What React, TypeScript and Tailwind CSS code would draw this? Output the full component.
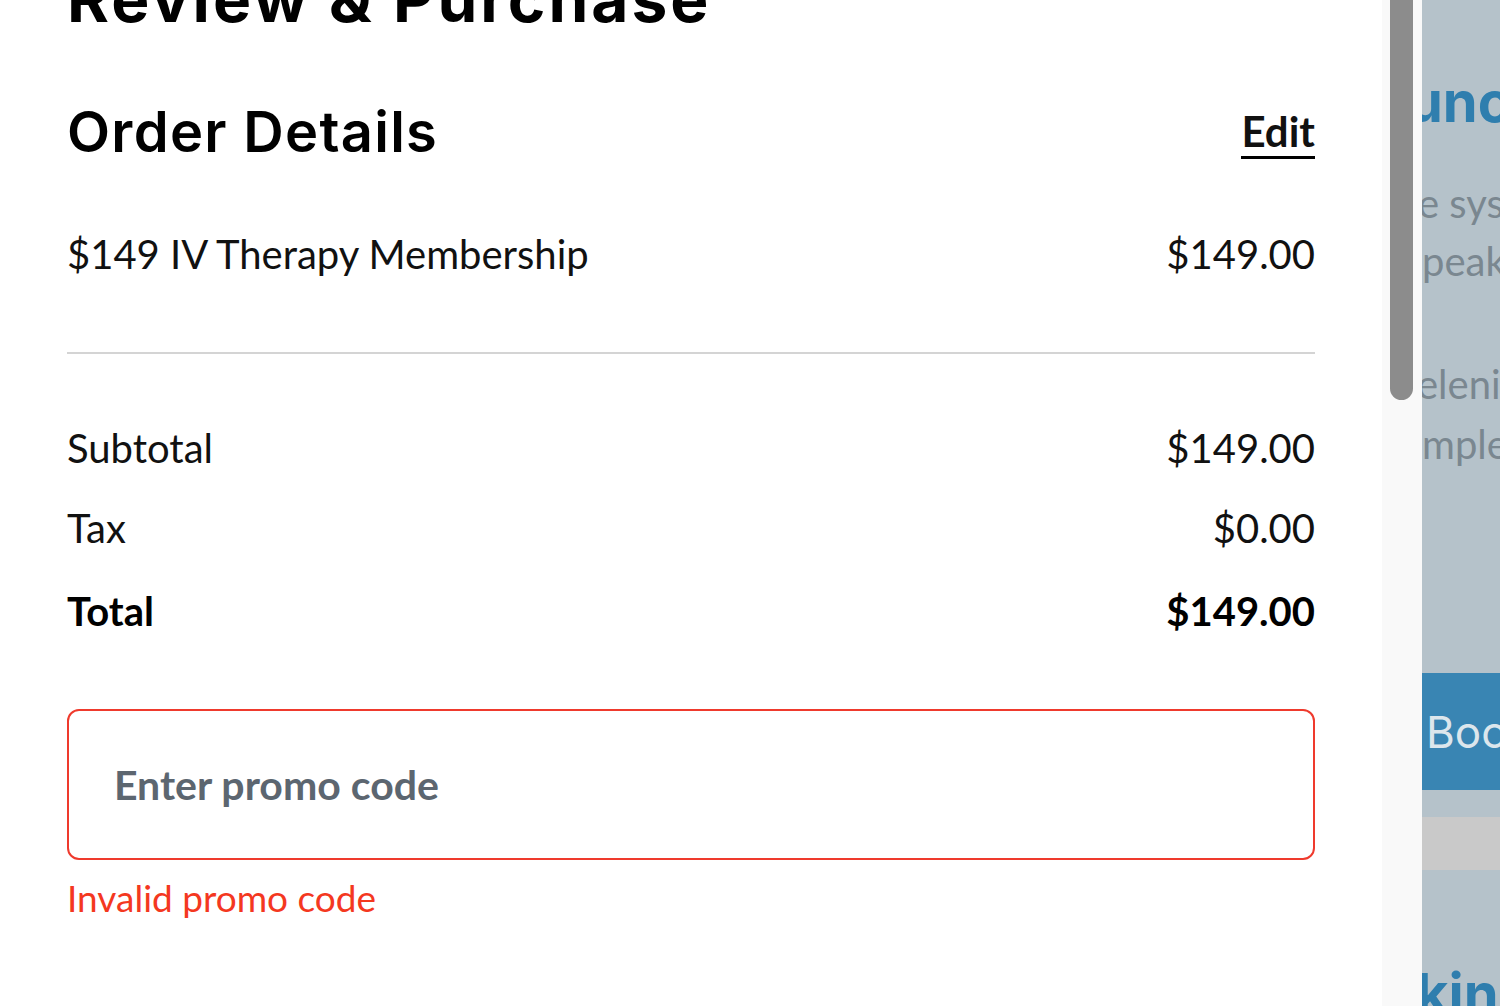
export default function App() {
  const body = { fontFamily: "Lato, 'Open Sans', sans-serif" };
  const head = { fontFamily: "Inter, 'DejaVu Sans', sans-serif" };

  return (
    <div className="flex h-[1006px] w-[1500px] overflow-hidden bg-white">
      {/* drawer */}
      <div className="w-[1382px] shrink-0 bg-white pl-[67px] pr-[67px]" style={body}>
        <h1 className="-mt-[33px] text-[64px] font-bold leading-[64px] tracking-[3px] text-black" style={head}>
          Review &amp; Purchase
        </h1>

        <div className="mt-[69px] flex items-start justify-between">
          <h2 className="text-[56px] font-semibold leading-[64px] tracking-[1.3px] text-black" style={head}>
            Order Details
          </h2>
          <button className="mt-[9px] border-b-[3px] border-black pb-[3px] text-[42px] font-bold leading-[44px] text-[#111]">
            Edit
          </button>
        </div>

        <div className="mt-[66px] flex items-center justify-between text-[40px] leading-[48px] text-[#111]">
          <span>$149 IV Therapy Membership</span>
          <span>$149.00</span>
        </div>

        <div className="mt-[74px] h-[2px] bg-[#d4d4d4]" />

        <div className="mt-[70px] text-[40px] leading-[48px] text-[#111]">
          <div className="flex items-center justify-between">
            <span>Subtotal</span>
            <span>$149.00</span>
          </div>
          <div className="mt-[32px] flex items-center justify-between">
            <span>Tax</span>
            <span>$0.00</span>
          </div>
          <div className="mt-[35px] flex items-center justify-between font-bold text-black">
            <span>Total</span>
            <span>$149.00</span>
          </div>
        </div>

        <div className="mt-[74px] flex h-[151px] items-center rounded-[12px] border-2 border-[#ef3a2d] px-[45px]">
          <input
            placeholder="Enter promo code"
            className="w-full bg-transparent text-[41px] font-bold text-[#5c6670] outline-none placeholder:text-[#5c6670]"
            style={body}
          />
        </div>
        <p className="mt-[16px] text-[37px] leading-[44px] text-[#f4381f]">Invalid promo code</p>
      </div>

      {/* scroll track */}
      <div className="w-[40px] shrink-0 bg-[#f9f9f9]">
        <div className="ml-[8px] h-[400px] w-[23px] rounded-b-full bg-[#8c8c8c]" />
      </div>

      {/* page behind the drawer */}
      <div className="flex-1 overflow-hidden bg-[#b5c2ca] whitespace-nowrap" style={body}>
        <p className="-ml-[14px] mt-[70px] text-[56px] font-bold leading-[64px] text-[#2f7eae]" style={head}>
          unc
        </p>
        <div className="mt-[40px] text-[40px] leading-[58px] text-[#7a8790]">
          <p className="-ml-[4px]">e sys</p>
          <p className="ml-[0px]">peak</p>
        </div>
        <div className="mt-[64px] text-[40px] leading-[60px] text-[#7a8790]">
          <p className="-ml-[5px]">eleniu</p>
          <p className="ml-[0px]">mple</p>
        </div>
        <div className="mt-[199px] flex h-[117px] items-center bg-[#3985b3] pl-[4px] text-[44px] text-[#dce6ec]" style={head}>
          Boo
        </div>
        <div className="mt-[27px] h-[53px] bg-[#c9c9c9]" />
        <p className="-ml-[6px] mt-[92px] text-[56px] font-bold leading-[64px] text-[#2f7eae]" style={head}>
          kin
        </p>
      </div>
    </div>
  );
}
